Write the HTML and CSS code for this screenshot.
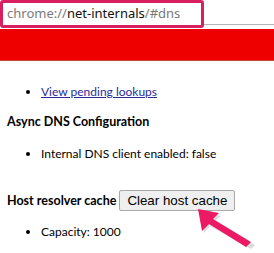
FILE: index.html
```html
<!DOCTYPE html>
<html lang="en">
<head>
  <meta charset="UTF-8">
  <title>net-internals DNS</title>
  <link rel="stylesheet" href="styles.css">
</head>
<body>
  <div class="toolbar">
    <div class="omnibox"><span class="dim">chrome://</span>net-internals<span class="dim">/#dns</span></div>
  </div>
  <div class="banner"></div>

  <div class="content">
    <ul>
      <li><a href="#">View pending lookups</a></li>
    </ul>

    <h4>Async DNS Configuration</h4>
    <ul>
      <li>Internal DNS client enabled: false</li>
    </ul>

    <div class="cacheRow">
      <h4>Host resolver cache</h4>
      <button>Clear host cache</button>
    </div>
    <ul>
      <li>Capacity: 1000</li>
    </ul>
  </div>

  <svg class="arrow" width="274" height="253" viewBox="0 0 274 253">
    <polygon points="200,212 204,233 210,226 251,249 255,245 214,222 221,216" fill="#999" opacity="0.35"/>
    <polygon points="198,209 202,231 209,224 246,247 251,242 213,219 219,213" fill="#ec1a64"/>
  </svg>
</body>
</html>
```

FILE: styles.css
```css
body {
  margin: 0;
  font-family: Lato, "Noto Sans", sans-serif;
  font-size: 12px;
  color: #000;
  background: white;
  width: 274px;
  height: 253px;
  overflow: hidden;
  position: relative;
}
.toolbar {
  height: 24px;
  border-bottom: 1px solid #b5b5b5;
}
.omnibox {
  position: absolute;
  left: 0;
  top: 0;
  width: 194px;
  height: 22px;
  border: 3px solid #d81f5f;
  border-radius: 3px;
  background: white;
  padding-left: 4px;
  font-family: "Noto Sans", sans-serif;
  font-size: 13px;
  line-height: 20px;
  color: #111;
  white-space: nowrap;
  box-sizing: content-box;
}
.dim {
  color: #7a7a7a;
}
.banner {
  margin-top: 4px;
  height: 31px;
  background: #ee0000;
  border-bottom: 1px solid #c84040;
}
.content {
  padding: 0 7px;
}
ul {
  margin: 0;
  padding-left: 34px;
}
li {
  line-height: 16px;
}
.content > ul:first-child {
  margin-top: 23px;
}
a {
  color: #2a2a9a;
}
h4 {
  font-size: 12.5px;
  font-weight: bold;
  margin: 14px 0 16px;
  line-height: 16px;
}
.cacheRow {
  display: flex;
  align-items: center;
  gap: 3px;
  margin-top: 28px;
  margin-bottom: 13px;
}
.cacheRow h4 {
  margin: 0;
}
button {
  font-family: "Liberation Sans", Arial, sans-serif;
  font-size: 13.33px;
  padding: 1px 7px;
  height: 21px;
  background: #efefef;
  border: 1px solid #a9a9a9;
  border-radius: 2px;
  color: #000;
}
.arrow {
  position: absolute;
  left: 0;
  top: 0;
  pointer-events: none;
}
```
